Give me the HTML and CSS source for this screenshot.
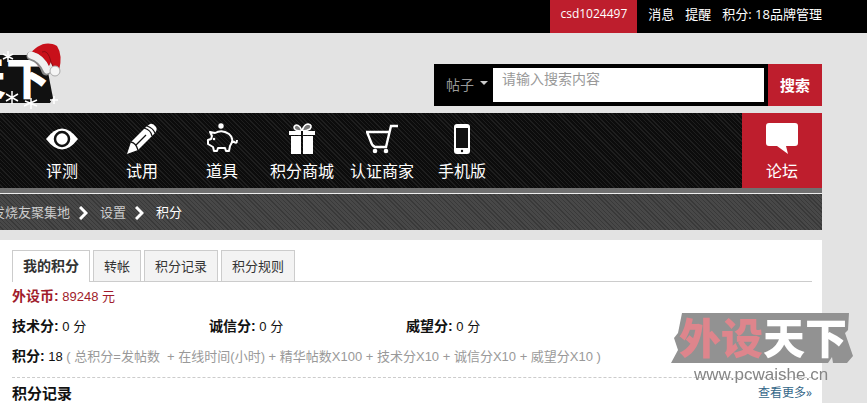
FILE: index.html
```
<!DOCTYPE html>
<html lang="zh-CN">
<head>
  <meta charset="UTF-8" />
  <meta name="viewport" content="width=device-width, initial-scale=1.0" />
  <title>积分 - 外设天下</title>
  <link rel="stylesheet" href="styles.css">
</head>
<body>
  <div class="topbar">
    <a class="user" href="#">csd1024497</a>
    <a href="#">消息</a>
    <a href="#">提醒</a>
    <span class="credit"><a href="#">积分: 18</a><a href="#">品牌管理</a></span>
  </div>

  <div class="wrap">
    <header class="header">
      <a class="logo" href="#" aria-label="外设天下">
        <svg width="64" height="72" viewBox="0 0 64 72">
          <path d="M0 15H37L46 22L53 58L50 63H0Z" fill="#111"/>
          <text class="logo-text" x="-38" y="55">天下</text>
          <g stroke="#fff" stroke-width="1.5">
            <path d="M8 11V22M3 14L13 19M3 19L13 14M12 51V64M6 54L18 61M6 61L18 54M31 58V69M25 61L37 66M24 66L37 60M54 56V64M50 60H58"/>
          </g>
          <path d="M29 15C36 6 46 0 57 6Q63 15 59 31H54L51 22L45 34Z" fill="#c8101a"/>
          <path d="M42 12Q48 9 51 22L54 28" fill="none" stroke="#8d0b12" stroke-width="1"/>
          <path d="M31 16Q42 19 46 31" fill="none" stroke="#888" stroke-width="9" stroke-linecap="round"/>
          <path d="M31 15Q42 18 47 30" fill="none" stroke="#f0f0f0" stroke-width="7" stroke-linecap="round"/>
          <circle cx="55" cy="31" r="5" fill="#f5f5f5" stroke="#aaa" stroke-width="1"/>
        </svg>
      </a>
      <form class="search">
        <span class="type">
          <select aria-label="搜索类型"><option>帖子</option></select>
        </span>
        <input type="text" placeholder="请输入搜索内容" aria-label="搜索内容">
        <button type="button">搜索</button>
      </form>
    </header>

    <nav class="nav">
      <a href="#">
        <svg width="32" height="32" viewBox="0 0 32 32"><path d="M0 17Q16-4 32 17Q16 38 0 17Z" fill="#fff"/><circle cx="16" cy="17" r="7" fill="#fff" stroke="#111" stroke-width="2.5"/></svg>
        评测
      </a>
      <a href="#">
        <svg width="32" height="32" viewBox="0 0 32 32"><path d="M1 32L5 20L20 5L24 2Q27 1 30 5Q32 8 28 12L12 28Z" fill="#fff"/><path d="M5 20Q10 21 12 28M18 6Q25 8 26 14M21 4Q27 6 29 11M10 23L20 13" fill="none" stroke="#111" stroke-width="1.3"/></svg>
        试用
      </a>
      <a href="#">
        <svg width="32" height="32" viewBox="0 0 32 32"><circle cx="15" cy="4" r="2.7" fill="#fff"/><g fill="none" stroke="#fff" stroke-width="2" stroke-linejoin="round"><path d="M6 14L4 10L9 11Q16 7 23 12Q29 17 24 24L23 29H20L19 26H12L11 29H8L7 25L2 22V18L5 17ZM27 19Q31 23 31 18"/></g><circle cx="8" cy="17" r="1.3" fill="#fff"/></svg>
        道具
      </a>
      <a href="#">
        <svg width="32" height="32" viewBox="0 0 32 32"><path d="M3 9H29V13H3ZM5 14H15V32H5ZM17 14H27V32H17Z" fill="#fff"/><path d="M15 9Q8 9 8 5Q10 1 14 5L16 9Q18 2 22 2Q27 3 24 7Q21 9 16 9" fill="#777" stroke="#fff" stroke-width="1.6"/><path d="M16 9V13" stroke="#111" stroke-width="2"/></svg>
        积分商城
      </a>
      <a href="#">
        <svg width="32" height="32" viewBox="0 0 32 32"><path d="M32 4H25L20 25H9Q6 24 5 20L1 10H23" fill="none" stroke="#fff" stroke-width="2.4"/><circle cx="9" cy="29" r="2.3" fill="#fff"/><circle cx="20" cy="29" r="2.3" fill="#fff"/></svg>
        认证商家
      </a>
      <a href="#">
        <svg width="32" height="32" viewBox="0 0 32 32"><rect x="8" y="2" width="16" height="30" rx="3" fill="#fff"/><path d="M10 6H22V26H10Z" fill="#111"/><circle cx="16" cy="29" r="1.2" fill="#111"/></svg>
        手机版
      </a>
      <a class="forum" href="#">
        <svg width="32" height="32" viewBox="0 0 32 32"><path d="M3 1H29Q32 1 32 4V21Q32 24 29 24H20L22 32L11 24H3Q0 24 0 21V4Q0 1 3 1Z" fill="#fff"/></svg>
        论坛
      </a>
    </nav>

    <div class="crumbs">
      <a href="#">发烧友聚集地</a>
      <svg width="9" height="14" viewBox="0 0 9 14"><path d="M1 1L7 7L1 13" fill="none" stroke="#fff" stroke-width="3"/></svg>
      <a href="#">设置</a>
      <svg width="9" height="14" viewBox="0 0 9 14"><path d="M1 1L7 7L1 13" fill="none" stroke="#fff" stroke-width="3"/></svg>
      <a class="here" href="#">积分</a>
    </div>

    <main class="content">
      <div class="tabs">
        <a class="active" href="#">我的积分</a>
        <a href="#">转帐</a>
        <a href="#">积分记录</a>
        <a href="#">积分规则</a>
      </div>
      <ul class="credits">
        <li class="money"><b>外设币:</b> 89248 元</li>
        <li><b>技术分:</b> 0 分</li>
        <li><b>诚信分:</b> 0 分</li>
        <li><b>威望分:</b> 0 分</li>
        <li class="total"><b>积分:</b> 18 <span>( 总积分=发帖数 &nbsp;+ 在线时间(小时) + 精华帖数X100 + 技术分X10 + 诚信分X10 + 威望分X10 )</span></li>
      </ul>
      <div class="log-head">
        <h2>积分记录</h2>
        <a href="#">查看更多»</a>
      </div>
    </main>
  </div>

  <!-- site mark over the bottom right corner -->
  <svg class="mark" width="182" height="72" viewBox="0 0 182 72">
    <path d="M11 0H178L177 17L174 20L182 43L176 50H162L161 44L157 50H0L7 37L3 25L7 20Z" fill="#929292"/>
    <text class="mark-name" x="8" y="41"><tspan class="pink">外设</tspan>天下</text>
    <text class="mark-url" x="23" y="67">www.pcwaishe.cn</text>
  </svg>
</body>
</html>
```
FILE: styles.css
```
* { box-sizing: border-box; }
body {
  margin: 0;
  min-height: 100vh;
  display: flex;
  flex-direction: column;
  overflow: hidden;
  background: #e3e3e3;
  color: #111;
  font: 13px/20px "Open Sans", "Noto Sans CJK SC", sans-serif;
}
a { color: inherit; text-decoration: none; }
svg { display: block; }

.topbar {
  display: flex;
  justify-content: flex-end;
  gap: 11px;
  height: 33px;
  padding-right: 45px;
  background: #000;
  color: #fff;
  line-height: 28px;
}
.topbar .user {
  padding: 0 10px;
  background: #be1e2d;
  font-size: 12px;
}

.wrap {
  flex: 1;
  display: flex;
  flex-direction: column;
  margin-right: 45px;
}

.header {
  display: flex;
  justify-content: space-between;
  height: 80px;
  padding-top: 7px;
}
.logo-text { font: 900 44px "Noto Sans CJK SC", sans-serif; fill: #fff; }

.search {
  display: flex;
  width: 388px;
  height: 42px;
  margin-top: 24px;
  background: #000;
}
.type { position: relative; width: 59px; }
.type::after {
  content: "";
  position: absolute;
  right: 5px;
  top: 17px;
  border: 4px solid transparent;
  border-top-color: #ccc;
}
.type select {
  width: 100%;
  height: 100%;
  padding: 0 0 3px 12px;
  border: 0;
  appearance: none;
  background: #000;
  color: #999;
  font: 14px "Noto Sans CJK SC", sans-serif;
}
.search input {
  flex: 1;
  min-width: 0;
  margin: 4px 4px 4px 0;
  padding: 0 9px 14px;
  border: 0;
  background: #fff;
  font: 14px "Noto Sans CJK SC", sans-serif;
}
.search input::placeholder { color: #999; }
.search button {
  width: 54px;
  border: 0;
  padding: 0 0 2px;
  background: #be1e2d;
  color: #fff;
  font: bold 15px "Noto Sans CJK SC", sans-serif;
}

.nav {
  display: flex;
  height: 80px;
  padding-left: 22px;
  border-bottom: 5px solid #707070;
  background: repeating-linear-gradient(45deg, #0c0c0c 0 2px, #1e1e1e 2px 3px);
  color: #fff;
  font-size: 16px;
}
.nav a {
  display: flex;
  flex-direction: column;
  align-items: center;
  gap: 7px;
  width: 80px;
  padding-top: 9px;
  white-space: nowrap;
}
.nav .forum { margin-left: auto; background: #be1e2d; }

.crumbs {
  display: flex;
  align-items: center;
  height: 37px;
  margin-bottom: 10px;
  border-top: 1px solid #eee;
  background: repeating-linear-gradient(45deg, #484848 0 2px, #393939 2px 3px);
  color: #ccc;
}
.crumbs a:first-child { margin-left: -8px; }
.crumbs svg { margin: 2px 12px 0 9px; }
.crumbs .here { color: #fff; }

.content {
  flex: 1;
  padding: 10px 10px 0 12px;
  background: #fff;
}
.tabs {
  display: flex;
  gap: 3px;
  height: 32px;
  border-bottom: 1px solid #ccc;
}
.tabs a {
  padding: 5px 10px;
  border: 1px solid #ccc;
  border-bottom: 0;
  background: #f3f3f3;
  color: #333;
}
.tabs .active {
  margin-bottom: -1px;
  background: #fff;
  font-size: 14px;
  font-weight: bold;
}

.credits {
  display: grid;
  grid-template-columns: 197px 197px 1fr;
  grid-auto-rows: 30px;
  margin: 0;
  padding: 0 0 5px;
  border-bottom: 1px dashed #ccc;
  list-style: none;
  font-family: "Liberation Sans", "Noto Sans CJK SC", sans-serif;
  line-height: 28px;
  white-space: nowrap;
}
.credits b { font-size: 14px; }
.credits .money, .credits .total { grid-column: 1 / -1; }
.credits .money { color: #a01c2c; }
.credits .total span { color: #999; }

.log-head {
  display: flex;
  justify-content: space-between;
  padding-top: 5px;
}
.log-head h2 { margin: 0; font-size: 15px; line-height: 20px; }
.log-head a { color: #336688; font-size: 12px; }

.mark {
  position: fixed;
  right: 14px;
  bottom: 18px;
  pointer-events: none;
}
.mark-name { font: 900 42px "Noto Sans CJK SC", sans-serif; fill: #fff; }
.mark-name .pink { fill: #de858c; }
.mark-url { font: 17px "Liberation Sans", sans-serif; fill: #858585; }
```
